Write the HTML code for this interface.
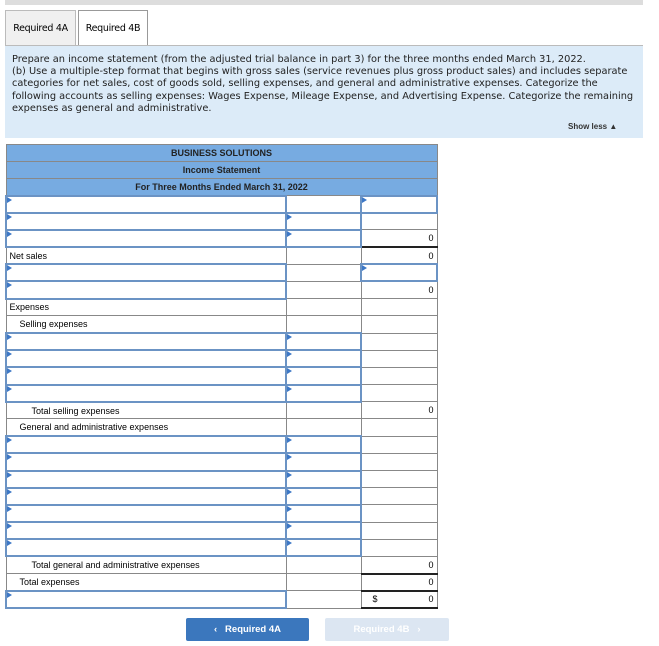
<!DOCTYPE html>
<html><head><style>
body{margin:0;width:659px;height:646px;background:#fff;font-family:"Liberation Sans",Verdana,sans-serif;position:relative;overflow:hidden}
.abs{position:absolute}
.tab{position:absolute;top:10px;height:36px;border:1px solid #bbb;border-bottom:none;font-size:9.5px;line-height:36px;text-align:center;box-sizing:border-box;font-family:"DejaVu Sans",sans-serif;letter-spacing:-0.3px}
.box{left:5px;top:46px;width:638px;height:92px;background:#dcebf8;font-family:"DejaVu Sans",sans-serif;font-size:9.8px;line-height:12.2px;padding:8px 7px;box-sizing:border-box;letter-spacing:0;color:#222}
table{position:absolute;left:5px;top:144px;border-collapse:collapse;font-size:9px}
tr{height:17.2px}
td{border:1px solid #888;padding:0 3px;position:relative}
.h{height:17px}
.h td{background:#77abe1;text-align:center;font-weight:bold;color:#222}
.i{border:2px solid #6b93c4;background:#fff}
.i::before{content:"";position:absolute;left:0;top:0;border-left:5px solid #3d78c6;border-top:3px solid transparent;border-bottom:3px solid transparent}
.r{text-align:right}
.tb{border-top:2px solid #222}
</style></head><body>
<div class="abs" style="left:5px;top:0;width:638px;height:5px;background:#ddd"></div>
<div class="tab" style="left:5px;width:71px;background:#f0f0f0">Required 4A</div>
<div class="tab" style="left:78px;width:70px;background:#fff;border-color:#999">Required 4B</div>
<div class="abs" style="left:5px;top:45px;width:638px;height:1px;background:#bbb"></div>
<div class="abs box">Prepare an income statement (from the adjusted trial balance in part 3) for the three months ended March 31, 2022.<br>(b) Use a multiple-step format that begins with gross sales (service revenues plus gross product sales) and includes separate categories for net sales, cost of goods sold, selling expenses, and general and administrative expenses. Categorize the following accounts as selling expenses: Wages Expense, Mileage Expense, and Advertising Expense. Categorize the remaining expenses as general and administrative.</div>
<div class="abs" style="left:568px;top:122px;font-size:8px;font-weight:bold;color:#333">Show less ▲</div>
<table>
<colgroup><col style="width:280px"><col style="width:75px"><col style="width:76px"></colgroup>
<tr class="h"><td colspan="3">BUSINESS SOLUTIONS</td></tr>
<tr class="h"><td colspan="3">Income Statement</td></tr>
<tr class="h"><td colspan="3">For Three Months Ended March 31, 2022</td></tr>
<tr><td class="i"></td><td></td><td class="i"></td></tr>
<tr><td class="i"></td><td class="i"></td><td></td></tr>
<tr><td class="i"></td><td class="i"></td><td class="r">0</td></tr>
<tr><td>Net sales</td><td></td><td class="r tb">0</td></tr>
<tr><td class="i"></td><td></td><td class="i"></td></tr>
<tr><td class="i"></td><td></td><td class="r tb">0</td></tr>
<tr><td>Expenses</td><td></td><td></td></tr>
<tr><td style="padding-left:13px">Selling expenses</td><td></td><td></td></tr>
<tr><td class="i"></td><td class="i"></td><td></td></tr>
<tr><td class="i"></td><td class="i"></td><td></td></tr>
<tr><td class="i"></td><td class="i"></td><td></td></tr>
<tr><td class="i"></td><td class="i"></td><td></td></tr>
<tr><td style="padding-left:25px">Total selling expenses</td><td class="tb"></td><td class="r">0</td></tr>
<tr><td style="padding-left:13px">General and administrative expenses</td><td></td><td></td></tr>
<tr><td class="i"></td><td class="i"></td><td></td></tr>
<tr><td class="i"></td><td class="i"></td><td></td></tr>
<tr><td class="i"></td><td class="i"></td><td></td></tr>
<tr><td class="i"></td><td class="i"></td><td></td></tr>
<tr><td class="i"></td><td class="i"></td><td></td></tr>
<tr><td class="i"></td><td class="i"></td><td></td></tr>
<tr><td class="i"></td><td class="i"></td><td></td></tr>
<tr><td style="padding-left:25px">Total general and administrative expenses</td><td class="tb"></td><td class="r">0</td></tr>
<tr><td style="padding-left:13px">Total expenses</td><td></td><td class="r tb">0</td></tr>
<tr><td class="i"></td><td></td><td class="r tb" style="border-bottom:2px solid #222"><span style="float:left;padding-left:8px">$</span>0</td></tr>
</table>
<div class="abs" style="left:186px;top:618px;width:123px;height:23px;background:#3b77bd;border-radius:2px;color:#fff;font-size:9.5px;font-weight:bold;line-height:23px;text-align:center">‹&nbsp;&nbsp;&nbsp;Required 4A</div>
<div class="abs" style="left:325px;top:618px;width:124px;height:23px;background:#dce6f2;border-radius:2px;color:#fff;font-size:9.5px;font-weight:bold;line-height:23px;text-align:center">Required 4B&nbsp;&nbsp;&nbsp;›</div>
</body></html>
